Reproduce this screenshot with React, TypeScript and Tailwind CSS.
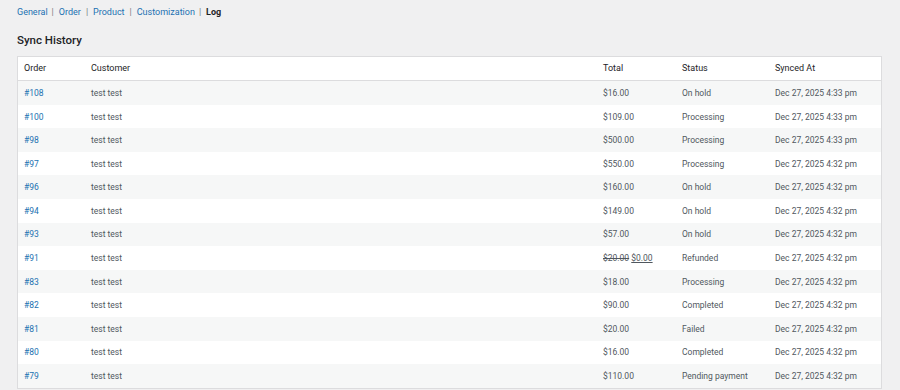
import React from "react";

const rows: { id: string; total: React.ReactNode; status: string; at: string }[] = [
  { id: "#108", total: "$16.00", status: "On hold", at: "Dec 27, 2025 4:33 pm" },
  { id: "#100", total: "$109.00", status: "Processing", at: "Dec 27, 2025 4:33 pm" },
  { id: "#98", total: "$500.00", status: "Processing", at: "Dec 27, 2025 4:33 pm" },
  { id: "#97", total: "$550.00", status: "Processing", at: "Dec 27, 2025 4:32 pm" },
  { id: "#96", total: "$160.00", status: "On hold", at: "Dec 27, 2025 4:32 pm" },
  { id: "#94", total: "$149.00", status: "On hold", at: "Dec 27, 2025 4:32 pm" },
  { id: "#93", total: "$57.00", status: "On hold", at: "Dec 27, 2025 4:32 pm" },
  {
    id: "#91",
    total: (
      <>
        <del>$20.00</del> <ins className="underline">$0.00</ins>
      </>
    ),
    status: "Refunded",
    at: "Dec 27, 2025 4:32 pm",
  },
  { id: "#83", total: "$18.00", status: "Processing", at: "Dec 27, 2025 4:32 pm" },
  { id: "#82", total: "$90.00", status: "Completed", at: "Dec 27, 2025 4:32 pm" },
  { id: "#81", total: "$20.00", status: "Failed", at: "Dec 27, 2025 4:32 pm" },
  { id: "#80", total: "$16.00", status: "Completed", at: "Dec 27, 2025 4:32 pm" },
  { id: "#79", total: "$110.00", status: "Pending payment", at: "Dec 27, 2025 4:32 pm" },
];

export default function App() {
  return (
    <div className="min-h-[390px] bg-[#f0f0f1] pl-[17px] pr-[18px] pt-[6px] text-[#50575e] [font-family:Roboto,sans-serif] text-[8.5px]">
      <nav className="flex items-center h-[14px] text-[9px]">
        <a className="text-[#2271b1]">General</a>
        <span className="text-[#787c82] ml-[4px] mr-[5px]">|</span>
        <a className="text-[#2271b1]">Order</a>
        <span className="text-[#787c82] ml-[5px] mr-[5px]">|</span>
        <a className="text-[#2271b1]">Product</a>
        <span className="text-[#787c82] ml-[5px] mr-[5px]">|</span>
        <a className="text-[#2271b1]">Customization</a>
        <span className="text-[#787c82] ml-[4px] mr-[5px]">|</span>
        <span className="font-bold text-[#1d2327]">Log</span>
      </nav>
      <h2 className="mt-[12px] h-[16px] text-[11.5px] font-medium text-[#1d2327] leading-[16px]">Sync History</h2>
      <div className="mt-[8px] border border-[#dcdcde] bg-white">
        <div className="flex h-[24px] items-center border-b border-[#dcdcde] text-[#1d2327] text-[9px]">
          <div className="w-[66px] pl-[6px]">Order</div>
          <div className="flex-1 pl-[7px]">Customer</div>
          <div className="w-[80px] pl-[1px]">Total</div>
          <div className="w-[93px]">Status</div>
          <div className="w-[106px]">Synced At</div>
        </div>
        {rows.map((r, i) => (
          <div
            key={r.id}
            className={`flex h-[23.6px] items-center pt-[1px] ${i % 2 === 0 ? "bg-[#f6f7f7]" : "bg-white"}`}
          >
            <div className="w-[66px] pl-[6px] text-[#2271b1]">{r.id}</div>
            <div className="flex-1 pl-[7px]">test test</div>
            <div className="w-[80px] pl-[1px]">{r.total}</div>
            <div className="w-[93px]">{r.status}</div>
            <div className="w-[106px]">{r.at}</div>
          </div>
        ))}
      </div>
    </div>
  );
}
